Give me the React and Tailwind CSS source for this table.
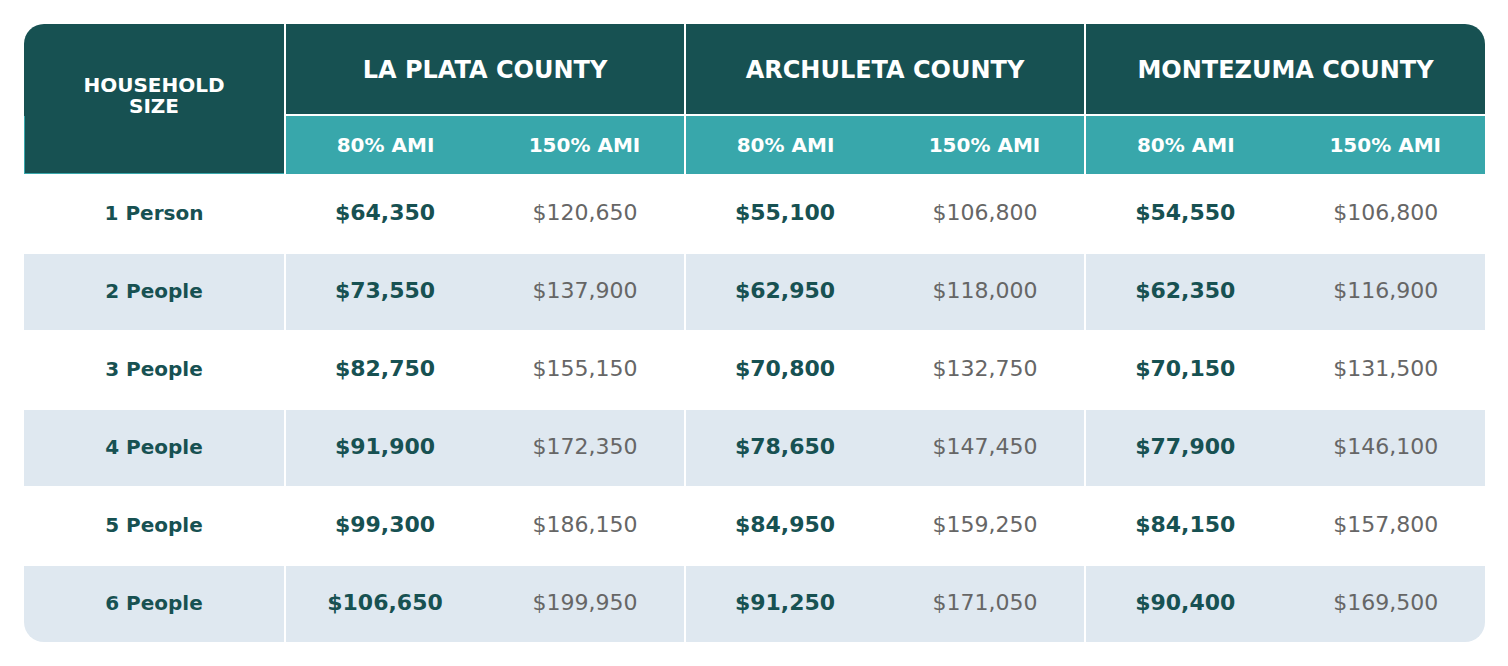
import React from "react";

const counties = [
  { name: "LA PLATA COUNTY", w: "w-[398px]" },
  { name: "ARCHULETA COUNTY", w: "w-[398px]" },
  { name: "MONTEZUMA COUNTY", w: "w-[399px]" },
];

const rows = [
  ["1 Person", ["$64,350", "$120,650"], ["$55,100", "$106,800"], ["$54,550", "$106,800"]],
  ["2 People", ["$73,550", "$137,900"], ["$62,950", "$118,000"], ["$62,350", "$116,900"]],
  ["3 People", ["$82,750", "$155,150"], ["$70,800", "$132,750"], ["$70,150", "$131,500"]],
  ["4 People", ["$91,900", "$172,350"], ["$78,650", "$147,450"], ["$77,900", "$146,100"]],
  ["5 People", ["$99,300", "$186,150"], ["$84,950", "$159,250"], ["$84,150", "$157,800"]],
  ["6 People", ["$106,650", "$199,950"], ["$91,250", "$171,050"], ["$90,400", "$169,500"]],
];

export default function App() {
  return (
    <div className="w-[1508px] h-[666px] bg-white pt-6 pl-6 font-['DejaVu_Sans','Liberation_Sans',sans-serif]">
      <div className="w-[1461px] rounded-[20px] overflow-hidden bg-white flex flex-col gap-[2px]">
        {/* Header */}
        <div className="flex gap-[2px]">
          <div className="relative w-[260px] h-[150px] bg-[#175152] shadow-[inset_0_-1px_0_#38a7ab] flex items-center justify-center pb-[7px] before:absolute before:left-0 before:top-[92px] before:bottom-0 before:w-px before:bg-[#38a7ab]">
            <div className="text-white font-bold text-[20px] leading-[21px] text-center">
              HOUSEHOLD
              <br />
              SIZE
            </div>
          </div>
          {counties.map((c) => (
            <div key={c.name} className={`${c.w} flex flex-col gap-[2px]`}>
              <div className="h-[90px] bg-[#175152] flex items-center justify-center text-white font-bold text-[24px] pt-[2px]">
                {c.name}
              </div>
              <div className="h-[58px] bg-[#38a7ab] flex text-white font-bold text-[20px]">
                <div className="flex-1 flex items-center justify-center">80% AMI</div>
                <div className="flex-1 flex items-center justify-center">150% AMI</div>
              </div>
            </div>
          ))}
        </div>
        {/* Body */}
        {rows.map((r, i) => {
          const bg = i % 2 === 1 ? "bg-[#dfe8f0]" : "bg-white";
          return (
            <div key={r[0]} className="flex gap-[2px] h-[76px]">
              <div className={`w-[260px] ${bg} flex items-center justify-center pb-[3px] text-[20px] font-bold text-[#175152]`}>
                {r[0]}
              </div>
              {[1, 2, 3].map((k) => (
                <div key={k} className={`${counties[k - 1].w} ${bg} flex pb-[3px]`}>
                  <div className="flex-1 flex items-center justify-center pr-[2px] text-[22px] font-bold text-[#175152]">
                    {r[k][0]}
                  </div>
                  <div className="flex-1 flex items-center justify-center text-[22px] text-[#666666]">
                    {r[k][1]}
                  </div>
                </div>
              ))}
            </div>
          );
        })}
      </div>
    </div>
  );
}
